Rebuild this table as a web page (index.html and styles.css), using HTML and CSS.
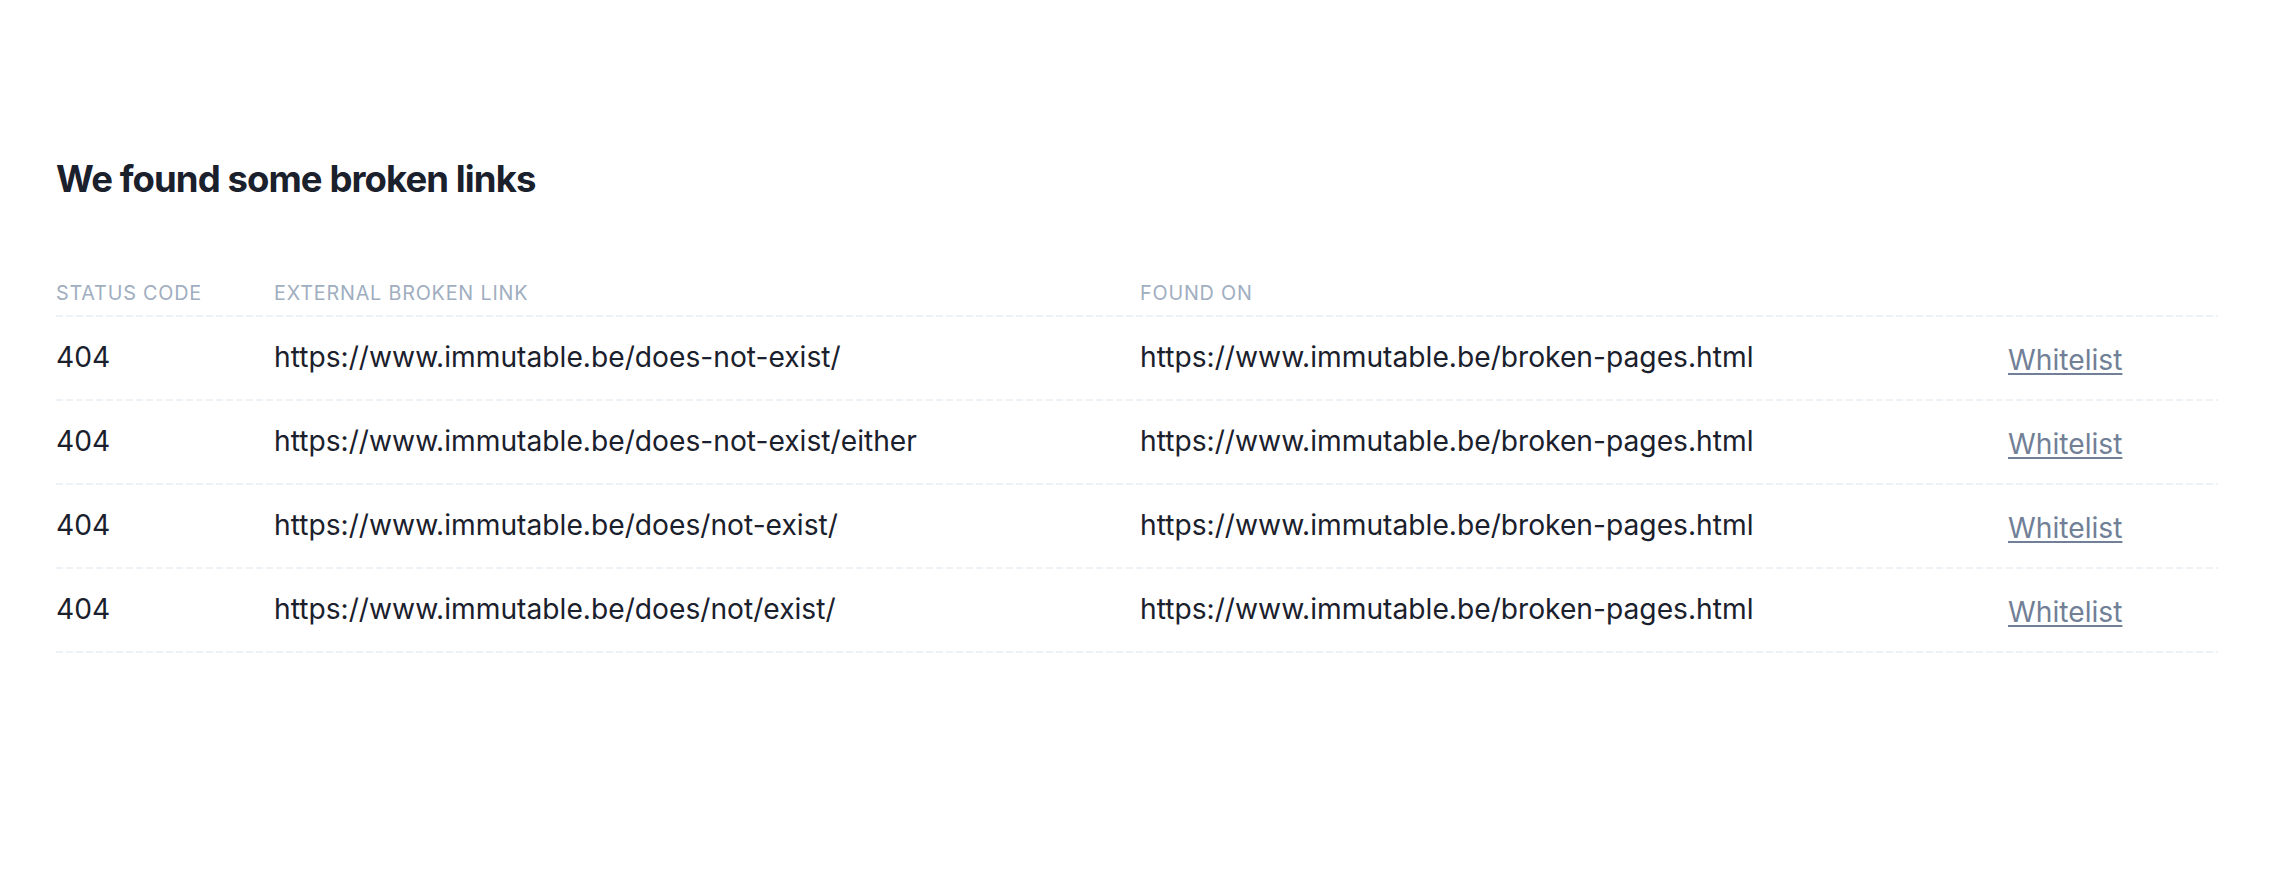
FILE: index.html
```html
<!DOCTYPE html>
<html lang="en">
<head>
<meta charset="utf-8">
<title>Broken links</title>
<link rel="stylesheet" href="styles.css">
</head>
<body>
<main class="page">
  <h1 class="title">We found some broken links</h1>
  <div class="table">
    <div class="row head">
      <div class="cell">Status code</div>
      <div class="cell">External broken link</div>
      <div class="cell">Found on</div>
      <div class="cell"></div>
    </div>
    <div class="row">
      <div class="cell">404</div>
      <div class="cell">https://www.immutable.be/does-not-exist/</div>
      <div class="cell">https://www.immutable.be/broken-pages.html</div>
      <div class="cell action"><a href="#">Whitelist</a></div>
    </div>
    <div class="row">
      <div class="cell">404</div>
      <div class="cell">https://www.immutable.be/does-not-exist/either</div>
      <div class="cell">https://www.immutable.be/broken-pages.html</div>
      <div class="cell action"><a href="#">Whitelist</a></div>
    </div>
    <div class="row">
      <div class="cell">404</div>
      <div class="cell">https://www.immutable.be/does/not-exist/</div>
      <div class="cell">https://www.immutable.be/broken-pages.html</div>
      <div class="cell action"><a href="#">Whitelist</a></div>
    </div>
    <div class="row">
      <div class="cell">404</div>
      <div class="cell">https://www.immutable.be/does/not/exist/</div>
      <div class="cell">https://www.immutable.be/broken-pages.html</div>
      <div class="cell action"><a href="#">Whitelist</a></div>
    </div>
  </div>
</main>
</body>
</html>
```

FILE: styles.css
```css
* { box-sizing: border-box; }
html, body { margin: 0; padding: 0; background: #fff; }
body {
  font-family: Inter, "Noto Sans", sans-serif;
  color: #1a202c;
}
.page {
  padding: 155px 54px 0 56px;
}
.title {
  margin: 0;
  font-size: 36.5px;
  line-height: 48px;
  font-weight: 700;
  letter-spacing: -0.025em;
  color: #1a202c;
}
.table {
  margin-top: 78px;
}
.row {
  display: grid;
  grid-template-columns: 218px 866px 1fr 210px;
  font-size: 28.2px;
  line-height: 43px;
  padding: 19px 0 22px;
  background-image: repeating-linear-gradient(to right, #edf2f7 0 7px, transparent 7px 10px);
  background-size: 100% 2px;
  background-position: left bottom;
  background-repeat: no-repeat;
}
.row.head {
  font-size: 19.8px;
  line-height: 24px;
  padding: 0 0 12px;
  color: #a0aec0;
  text-transform: uppercase;
  letter-spacing: 0.04em;
}
.action {
  line-height: 37px;
  padding-top: 6px;
}
.action a {
  color: #718096;
  text-decoration: underline;
  text-decoration-thickness: 2px;
  text-underline-offset: 3px;
}
```
